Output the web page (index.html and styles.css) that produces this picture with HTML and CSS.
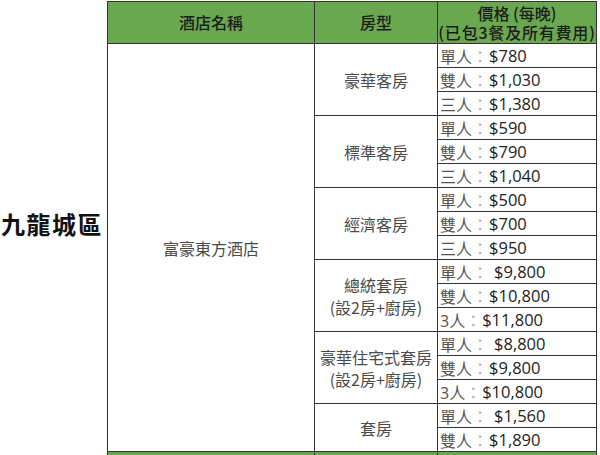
FILE: index.html
```html
<!DOCTYPE html>
<html lang="zh-Hant">
<head>
<meta charset="utf-8">
<title>酒店價格</title>
<link rel="stylesheet" href="styles.css">
</head>
<body>
<div class="sheet">
  <div class="region">九龍城區</div>

  <div class="cell head first">酒店名稱</div>
  <div class="cell head">房型</div>
  <div class="cell head price-head"><span>價格 (每晚)</span><span>(已包3餐及所有費用)</span></div>

  <div class="cell hotel first">富豪東方酒店</div>

  <div class="cell room span3">豪華客房</div>
  <div class="cell price"><span class="lbl">單人</span><span class="col">：</span><span class="amt">$780</span></div>
  <div class="cell price"><span class="lbl">雙人</span><span class="col">：</span><span class="amt">$1,030</span></div>
  <div class="cell price"><span class="lbl">三人</span><span class="col">：</span><span class="amt">$1,380</span></div>

  <div class="cell room span3">標準客房</div>
  <div class="cell price"><span class="lbl">單人</span><span class="col">：</span><span class="amt">$590</span></div>
  <div class="cell price"><span class="lbl">雙人</span><span class="col">：</span><span class="amt">$790</span></div>
  <div class="cell price"><span class="lbl">三人</span><span class="col">：</span><span class="amt">$1,040</span></div>

  <div class="cell room span3">經濟客房</div>
  <div class="cell price"><span class="lbl">單人</span><span class="col">：</span><span class="amt">$500</span></div>
  <div class="cell price"><span class="lbl">雙人</span><span class="col">：</span><span class="amt">$700</span></div>
  <div class="cell price"><span class="lbl">三人</span><span class="col">：</span><span class="amt">$950</span></div>

  <div class="cell room span3"><span>總統套房</span><span>(設2房+廚房)</span></div>
  <div class="cell price"><span class="lbl">單人</span><span class="col">：</span><span class="amt sp">$9,800</span></div>
  <div class="cell price"><span class="lbl">雙人</span><span class="col">：</span><span class="amt">$10,800</span></div>
  <div class="cell price"><span class="lbl num">3人</span><span class="col">：</span><span class="amt">$11,800</span></div>

  <div class="cell room span3"><span>豪華住宅式套房</span><span>(設2房+廚房)</span></div>
  <div class="cell price"><span class="lbl">單人</span><span class="col">：</span><span class="amt sp">$8,800</span></div>
  <div class="cell price"><span class="lbl">雙人</span><span class="col">：</span><span class="amt">$9,800</span></div>
  <div class="cell price"><span class="lbl num">3人</span><span class="col">：</span><span class="amt">$10,800</span></div>

  <div class="cell room span2">套房</div>
  <div class="cell price"><span class="lbl">單人</span><span class="col">：</span><span class="amt sp">$1,560</span></div>
  <div class="cell price"><span class="lbl">雙人</span><span class="col">：</span><span class="amt">$1,890</span></div>

  <div class="cell next first"></div>
  <div class="cell next"></div>
  <div class="cell next"></div>
</div>
</body>
</html>
```

FILE: styles.css
```css
html, body {
  margin: 0;
  padding: 0;
  background: #ffffff;
}

body {
  padding-top: 1px;
  font-family: "Open Sans", "Noto Sans CJK TC", sans-serif;
  overflow: hidden;
}

.sheet {
  display: grid;
  grid-template-columns: 107px 208px 123px 159px;
  grid-template-rows: 43px repeat(17, 24px) 3px;
}

.region {
  grid-column: 1;
  grid-row: 1 / span 19;
  display: flex;
  align-items: center;
  justify-content: center;
  padding-bottom: 10px;
  padding-right: 3px;
  font-family: "Noto Sans CJK TC", sans-serif;
  font-size: 24px;
  font-weight: 700;
  letter-spacing: 1.5px;
  color: #111111;
}

.cell {
  box-sizing: border-box;
  border-right: 1px solid #333333;
  border-bottom: 1px solid #333333;
  display: flex;
  align-items: center;
  justify-content: center;
  font-family: "Noto Sans CJK TC", sans-serif;
  font-size: 16px;
  color: #4a4a4a;
  white-space: nowrap;
}

.cell.first {
  border-left: 1px solid #333333;
}

.head {
  border-top: 1px solid #333333;
  background: #6aa84f;
  color: #1c1c1c;
  font-weight: 500;
  line-height: 19px;
}

.price-head {
  flex-direction: column;
  font-size: 16px;
}

.price-head span:last-child {
  letter-spacing: 0.8px;
}

.hotel {
  grid-column: 2;
  grid-row: 2 / span 17;
  padding-top: 1px;
}

.room {
  grid-column: 3;
  flex-direction: column;
  line-height: 22px;
}

.span3 {
  grid-row: span 3;
}

.span2 {
  grid-row: span 2;
}

.price {
  grid-column: 4;
  justify-content: flex-start;
  padding-left: 2px;
  font-family: "Open Sans", "Noto Sans CJK TC", sans-serif;
}

.lbl {
  font-family: "Noto Sans CJK TC", sans-serif;
  color: #555555;
}

.lbl.num {
  font-family: "Open Sans", "Noto Sans CJK TC", sans-serif;
}

.col {
  display: inline-block;
  width: 16px;
  text-align: center;
  margin-right: 1px;
  font-family: "Noto Sans CJK TC", sans-serif;
  color: #b0b0b0;
}

.amt {
  color: #222222;
  font-size: 16.5px;
}

.amt.sp {
  margin-left: 5px;
}

.next {
  background: #6aa84f;
  border-bottom: none;
}
```
